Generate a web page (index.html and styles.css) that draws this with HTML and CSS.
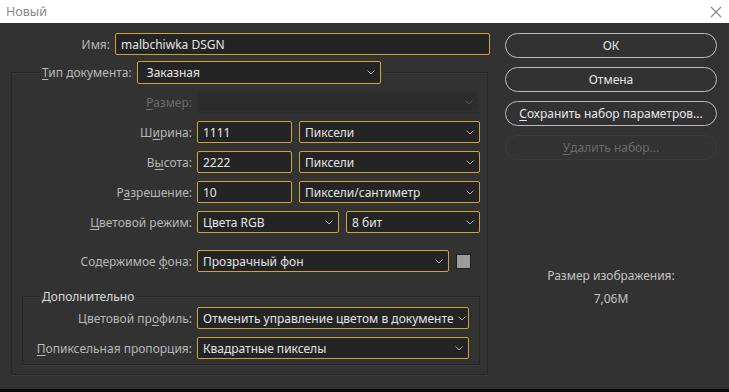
FILE: index.html
```html
<!DOCTYPE html>
<html lang="ru">
<head>
<meta charset="utf-8">
<title>Новый</title>
<link rel="stylesheet" href="styles.css">
</head>
<body>
<div class="titlebar">
  <span class="title">Новый</span>
  <svg class="close" width="12" height="12" viewBox="0 0 12 12"><path d="M1 1L11 11M11 1L1 11" stroke="#8a8a8a" stroke-width="1.2" fill="none"/></svg>
</div>
<div class="dialog">
  <div class="left">
    <div class="namerow">
      <span class="lbl name-lbl">Имя:</span>
      <div class="field name-field">malbchiwka DSGN</div>
    </div>
    <fieldset class="group">
      <legend class="group-legend">
        <span class="lbl"><u>Т</u>ип документа:</span>
        <div class="field select type-select"><span>Заказная</span><svg class="chev" width="8" height="5" viewBox="0 0 8 5"><path d="M0.5 0.5L4 4L7.5 0.5" stroke="#a8a8a8" fill="none"/></svg></div>
      </legend>
      <div class="rows">
        <div class="row">
          <span class="lbl wlbl disabled"><u>Р</u>азмер:</span>
          <div class="field select off w-full"><span></span><svg class="chev" width="8" height="5" viewBox="0 0 8 5"><path d="M0.5 0.5L4 4L7.5 0.5" stroke="#555" fill="none"/></svg></div>
        </div>
        <div class="row">
          <span class="lbl wlbl">Ш<u>и</u>рина:</span>
          <div class="field w-num">1111</div>
          <div class="field select w-unit"><span>Пиксели</span><svg class="chev" width="8" height="5" viewBox="0 0 8 5"><path d="M0.5 0.5L4 4L7.5 0.5" stroke="#a8a8a8" fill="none"/></svg></div>
        </div>
        <div class="row">
          <span class="lbl wlbl">В<u>ы</u>сота:</span>
          <div class="field w-num">2222</div>
          <div class="field select w-unit"><span>Пиксели</span><svg class="chev" width="8" height="5" viewBox="0 0 8 5"><path d="M0.5 0.5L4 4L7.5 0.5" stroke="#a8a8a8" fill="none"/></svg></div>
        </div>
        <div class="row">
          <span class="lbl wlbl">Р<u>а</u>зрешение:</span>
          <div class="field w-num">10</div>
          <div class="field select w-unit"><span>Пиксели/сантиметр</span><svg class="chev" width="8" height="5" viewBox="0 0 8 5"><path d="M0.5 0.5L4 4L7.5 0.5" stroke="#a8a8a8" fill="none"/></svg></div>
        </div>
        <div class="row">
          <span class="lbl wlbl"><u>Ц</u>ветовой режим:</span>
          <div class="field select w-mode"><span>Цвета RGB</span><svg class="chev" width="8" height="5" viewBox="0 0 8 5"><path d="M0.5 0.5L4 4L7.5 0.5" stroke="#a8a8a8" fill="none"/></svg></div>
          <div class="field select w-bit"><span>8 бит</span><svg class="chev" width="8" height="5" viewBox="0 0 8 5"><path d="M0.5 0.5L4 4L7.5 0.5" stroke="#a8a8a8" fill="none"/></svg></div>
        </div>
        <div class="row bgrow">
          <span class="lbl wlbl">Содержимое <u>ф</u>она:</span>
          <div class="field select w-bg"><span>Прозрачный фон</span><svg class="chev" width="8" height="5" viewBox="0 0 8 5"><path d="M0.5 0.5L4 4L7.5 0.5" stroke="#a8a8a8" fill="none"/></svg></div>
          <div class="swatch"></div>
        </div>
      </div>
      <fieldset class="group inner">
        <legend class="inner-legend">Дополнительно</legend>
        <div class="rows inner-rows">
          <div class="row">
            <span class="lbl ilbl">Цветовой пр<u>о</u>филь:</span>
            <div class="field select w-prof"><span>Отменить управление цветом в документе</span><svg class="chev" width="8" height="5" viewBox="0 0 8 5"><path d="M0.5 0.5L4 4L7.5 0.5" stroke="#a8a8a8" fill="none"/></svg></div>
          </div>
          <div class="row">
            <span class="lbl ilbl"><u>П</u>опиксельная пропорция:</span>
            <div class="field select w-prof"><span>Квадратные пикселы</span><svg class="chev" width="8" height="5" viewBox="0 0 8 5"><path d="M0.5 0.5L4 4L7.5 0.5" stroke="#a8a8a8" fill="none"/></svg></div>
          </div>
        </div>
      </fieldset>
    </fieldset>
  </div>
  <div class="right">
    <div class="btn">ОК</div>
    <div class="btn">Отмена</div>
    <div class="btn"><u>С</u>охранить набор параметров...</div>
    <div class="btn disabled-btn"><u>У</u>далить набор...</div>
    <div class="info">
      <div class="info-title">Размер изображения:</div>
      <div class="info-value">7,06M</div>
    </div>
  </div>
</div>
<div class="bottom"></div>
</body>
</html>
```
FILE: styles.css
```css
* { box-sizing: border-box; }
html, body { margin: 0; padding: 0; }
body {
  width: 729px;
  height: 392px;
  overflow: hidden;
  background: #323232;
  font-family: "Noto Sans", "Open Sans", sans-serif;
  font-size: 12px;
  color: #e2e2e2;
}
u { text-decoration: underline; text-underline-offset: 2px; }

.titlebar {
  height: 23px;
  background: #ffffff;
  display: flex;
  align-items: center;
  justify-content: space-between;
  padding: 0 7px 0 6px;
}
.title { color: #8a8a8a; font-size: 12.5px; }
.close { display: block; }

.dialog {
  height: 366px;
  display: flex;
}
.left {
  width: 490px;
  padding-top: 10px;
}
.lbl { color: #b8b8b8; white-space: nowrap; }
.lbl.disabled { color: #6c6c6c; }

.namerow {
  display: flex;
  align-items: center;
  height: 22px;
}
.name-lbl { width: 110px; text-align: right; margin-right: 5px; }
.name-field { width: 375px; }

.field {
  height: 22px;
  background: #242424;
  border: 1px solid #cda43a;
  border-radius: 2px;
  padding: 0 5px;
  display: flex;
  align-items: center;
  justify-content: space-between;
  white-space: nowrap;
  color: #e4e4e4;
}
.select .chev { flex: none; margin-left: 4px; }
.field.off {
  background: #2c2c2c;
  border-color: #2c2c2c;
  box-shadow: inset 0 0 0 1px #303030;
}

.group {
  margin: 6px 0 0 11px;
  width: 477px;
  border: 1px solid #272727;
  box-shadow: 0 1px 0 #3a3a3a, inset 0 1px 0 #3a3a3a;
  padding: 8px 0 9px 0;
  min-width: 0;
}
.group-legend {
  margin-left: 27px;
  padding: 0 3px;
  display: flex;
  align-items: center;
}
.group-legend .lbl { margin-right: 5px; }
.type-select { width: 244px; height: 23px; padding-left: 9px; }

.rows {
  display: flex;
  flex-direction: column;
  gap: 8px;
}
.row {
  display: flex;
  align-items: center;
  gap: 7px;
}
.wlbl { width: 180px; text-align: right; margin-right: -2px; }
.w-full { width: 282px; height: 21px; }
.w-num { width: 95px; }
.w-unit { width: 181px; }
.w-mode { width: 142px; }
.w-bit { width: 134px; }
.w-bg { width: 252px; }
.bgrow { margin-top: 9px; }
.swatch {
  width: 15px;
  height: 15px;
  background: #9c9c9c;
  border: 1px solid #1e1e1e;
}

.group.inner {
  margin: 16px 0 0 10px;
  width: 458px;
  padding: 2px 0 5px 0;
}
.inner-legend {
  margin-left: 16px;
  padding: 0 3px;
  color: #d8d8d8;
}
.ilbl { width: 169px; text-align: right; margin-right: -2px; }
.w-prof { width: 272px; }
.inner-rows { gap: 8px; }

.right {
  width: 239px;
  padding: 10px 0 0 15px;
}
.btn {
  width: 212px;
  height: 25px;
  border: 1px solid #bdbdbd;
  border-radius: 13px;
  display: flex;
  align-items: center;
  justify-content: center;
  color: #e8e8e8;
  margin-bottom: 9px;
}
.btn.disabled-btn {
  border-color: #3a3a3a;
  color: #6a6a6a;
  margin-top: 1px;
}
.info {
  margin-top: 107px;
  width: 212px;
  text-align: center;
  color: #c2c2c2;
}
.info-value { margin-top: 6px; }

.bottom {
  height: 3px;
  background: #0c0c0c;
}
```
